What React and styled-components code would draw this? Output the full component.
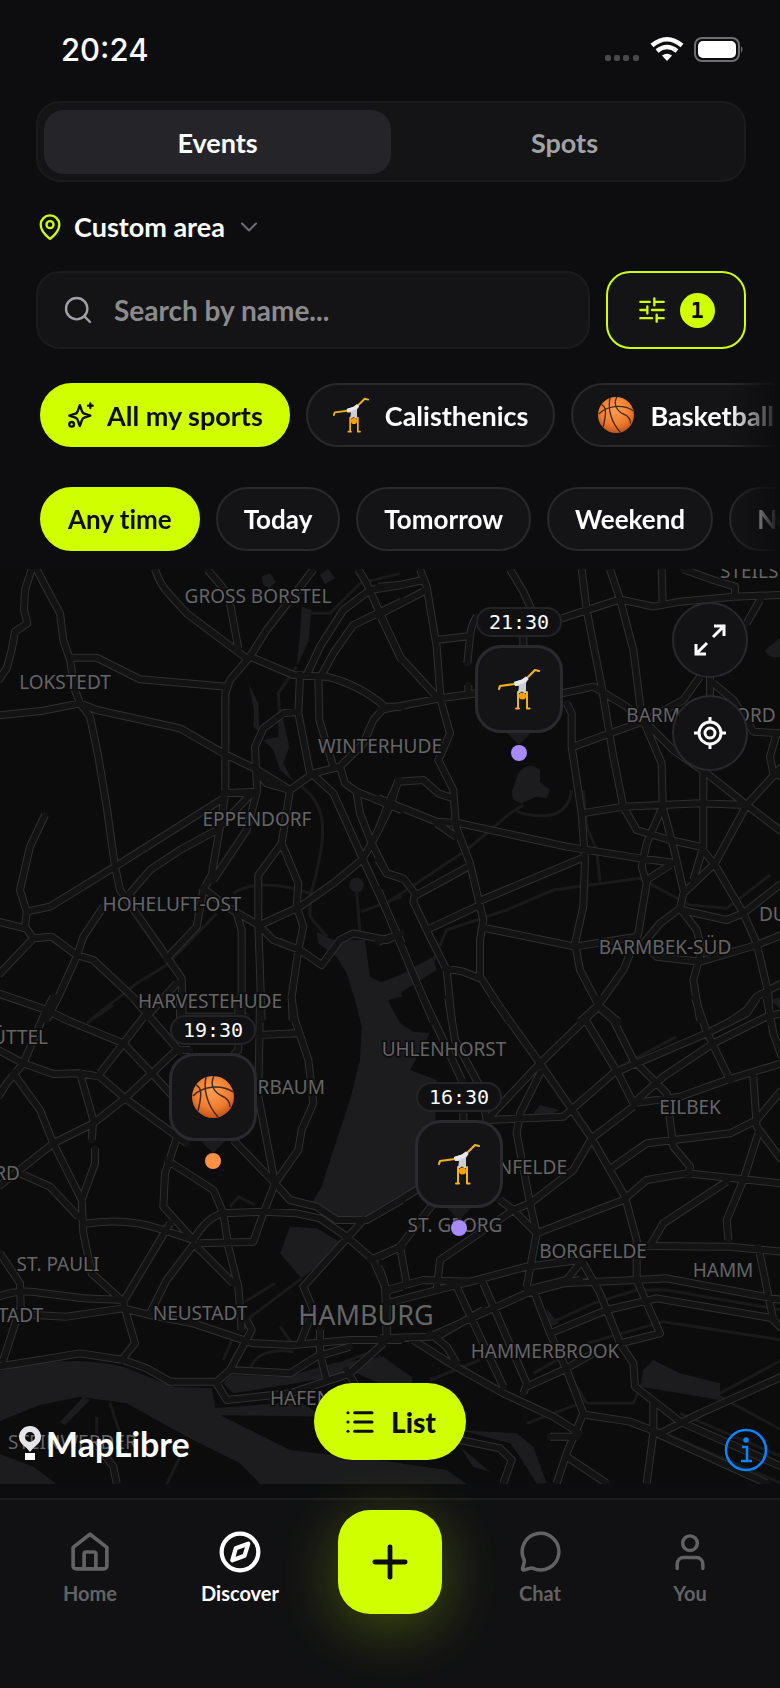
import styled, { createGlobalStyle } from 'styled-components';
import { MapPin, ChevronDown, Search, Plus, List } from 'lucide-react';

const lime = '#d0ff00';

const GlobalStyle = createGlobalStyle`
  * { box-sizing: border-box; }
  body {
    margin: 0;
    background: #0d0d0f;
    color: #fff;
    font-family: Lato, sans-serif;
    font-variant-ligatures: none;
  }
  button, input { font-family: inherit; font-variant-ligatures: none; }
`;

const Screen = styled.main`
  min-height: 100vh;
  display: flex;
  flex-direction: column;
  overflow: hidden;
`;

const StatusBar = styled.div`
  height: 101px;
  padding: 0 36px 2px 61px;
  display: flex;
  justify-content: space-between;
  align-items: center;
`;

const Clock = styled.time`
  font: 500 31px Inter, sans-serif;
`;

const Header = styled.header`
  display: flex;
  flex-direction: column;
  padding: 0 34px 0 36px;
`;

const Segmented = styled.div`
  display: flex;
  height: 81px;
  padding: 7px 6px 6px;
  border: 2px solid #1b1b1d;
  border-radius: 24px;
  background: #141416;
`;

const Segment = styled.button`
  flex: 1;
  border: 0;
  border-radius: 20px;
  background: ${(p) => (p.$active ? '#252429' : 'transparent')};
  color: ${(p) => (p.$active ? '#fff' : '#a1a1a6')};
  font-size: 27px;
  font-weight: 700;
`;

const AreaButton = styled.button`
  align-self: flex-start;
  display: flex;
  align-items: center;
  height: 89px;
  padding: 0;
  gap: 10px;
  border: 0;
  background: none;
  color: #fff;
  font-size: 27px;
  font-weight: 700;
`;

const SearchRow = styled.div`
  display: flex;
  gap: 16px;
  height: 78px;
`;

const SearchBox = styled.label`
  flex: 1;
  display: flex;
  align-items: center;
  gap: 20px;
  padding: 0 24px;
  border: 2px solid #1b1b1d;
  border-radius: 24px;
  background: #141416;
  color: #a1a1a6;
`;

const SearchInput = styled.input`
  flex: 1;
  min-width: 0;
  padding: 0;
  border: 0;
  outline: 0;
  background: none;
  color: #fff;
  font-size: 28px;
  font-weight: 700;
  &::placeholder { color: #8b8b8d; }
`;

const FilterButton = styled.button`
  width: 140px;
  display: flex;
  align-items: center;
  justify-content: center;
  gap: 14px;
  border: 2px solid ${lime};
  border-radius: 24px;
  background: #141416;
  color: ${lime};
`;

const Count = styled.span`
  width: 35px;
  height: 35px;
  border-radius: 50%;
  background: ${lime};
  color: #0d0d0f;
  font: 700 22px/35px 'DejaVu Sans Mono', monospace;
`;

const ChipRow = styled.div`
  display: flex;
  gap: 16px;
  margin-top: ${(p) => p.$top}px;
  padding-left: 40px;
  overflow: hidden;
  font-size: ${(p) => p.$size}px;
  mask-image: linear-gradient(to right, #000 calc(100% - 50px), transparent);
`;

const Chip = styled.button`
  flex: none;
  display: flex;
  align-items: center;
  gap: ${(p) => (p.$active ? 12 : 16)}px;
  height: 64px;
  padding: 0 ${(p) => (p.$wide ? 26 : 25)}px;
  border: 2px solid ${(p) => (p.$active ? lime : '#29292c')};
  border-radius: 32px;
  background: ${(p) => (p.$active ? lime : '#141416')};
  color: ${(p) => (p.$active ? '#0d0d0f' : '#fff')};
  font-size: inherit;
  font-weight: 700;
  white-space: nowrap;
`;

const MapArea = styled.section`
  position: relative;
  flex: 1;
  min-height: 915px;
  margin: 18px 0 14px;
  background: #0c0c0c;
`;

const MapCanvas = styled.svg`
  position: absolute;
  inset: 0;
  width: 100%;
  height: 100%;
`;

const District = styled.text`
  font-family: 'Noto Sans', sans-serif;
  font-size: ${(p) => (p.$big ? 27 : 19)}px;
  fill: #656567;
  stroke: #0c0c0c;
  stroke-width: 3px;
  paint-order: stroke;
`;

const Marker = styled.button`
  position: absolute;
  display: flex;
  flex-direction: column;
  align-items: center;
  padding: 0;
  border: 0;
  background: none;
  color: #fff;
  transform: translateX(-50%);
`;

const MarkerTime = styled.span`
  height: 30px;
  padding: 0 11px;
  margin-bottom: 8px;
  border: 2px solid #242427;
  border-radius: 15px;
  background: #111113;
  font: 400 20px/26px 'DejaVu Sans Mono', monospace;
`;

const MarkerBox = styled.span`
  display: grid;
  place-items: center;
  width: 88px;
  height: 88px;
  border: 3px solid #2a2a2e;
  border-radius: 26px;
  background: #141417;
`;

const MarkerTail = styled.span`
  border: solid transparent;
  border-width: 12px 12px 0;
  border-top-color: #1a1a1d;
`;

const MarkerDot = styled.span`
  width: 16px;
  height: 16px;
  border-radius: 50%;
  background: ${(p) => p.$color};
`;

const MapTools = styled.div`
  position: absolute;
  top: 33px;
  right: 32px;
  display: flex;
  flex-direction: column;
  gap: 17px;
`;

const RoundButton = styled.button`
  display: grid;
  place-items: center;
  width: 76px;
  height: 76px;
  padding: 0;
  border: 2px solid #29292c;
  border-radius: 50%;
  background: #131315;
  color: #fff;
`;

const ListButton = styled.button`
  position: absolute;
  left: 50%;
  bottom: 24px;
  transform: translateX(-50%);
  display: flex;
  align-items: center;
  justify-content: center;
  gap: 15px;
  width: 152px;
  height: 77px;
  border: 0;
  border-radius: 39px;
  background: ${lime};
  color: #0d0d0f;
  font-size: 28px;
  font-weight: 900;
`;

const Attribution = styled.a`
  position: absolute;
  left: 18px;
  bottom: 20px;
  display: flex;
  align-items: center;
  gap: 4px;
  color: #fff;
  font-size: 34px;
  font-weight: 700;
  line-height: 40px;
  text-decoration: none;
`;

const InfoButton = styled.button`
  position: absolute;
  right: 12px;
  bottom: 12px;
  padding: 0;
  border: 0;
  background: none;
  line-height: 0;
`;

const TabBar = styled.nav`
  position: relative;
  display: grid;
  grid-template-columns: repeat(5, 1fr);
  height: 190px;
  padding: 10px 15px 0;
  border-top: 2px solid #1d1d1f;
  background: #111113;
`;

const Tab = styled.a`
  display: flex;
  flex-direction: column;
  align-items: center;
  gap: 7px;
  height: 104px;
  padding-top: 20px;
  color: ${(p) => (p.$active ? '#fff' : '#626265')};
  font-size: 20px;
  font-weight: 700;
  line-height: 24px;
  text-decoration: none;
`;

const AddButton = styled.button`
  justify-self: center;
  display: grid;
  place-items: center;
  width: 104px;
  height: 104px;
  padding: 0;
  border: 0;
  border-radius: 32px;
  background: ${lime};
  color: #0d0d0f;
  box-shadow: 0 12px 60px rgba(208, 255, 0, 0.27);
`;

const Basketball = ({ size }) => (
  <svg width={size} height={size} viewBox="0 0 42 42" fill="none">
    <defs>
      <radialGradient id="ball" cx=".48" cy=".35" r=".65">
        <stop offset="0" stopColor="#ffa04f" />
        <stop offset=".65" stopColor="#ef7c2e" />
        <stop offset="1" stopColor="#c3541c" />
      </radialGradient>
    </defs>
    <circle cx="21" cy="21" r="21" fill="url(#ball)" />
    <path
      d="M1 20C10 10 29 8 41 16M14 1C11 15 16 30 26 41M22 0C17 9 23 17 30 20S38 28 38 31M4 9C11 12 9 22 6 35"
      stroke="#40291f"
      strokeWidth="1.5"
    />
  </svg>
);

const Cartwheel = ({ size }) => (
  <svg width={size} height={size} viewBox="0 0 42 42" fill="none" strokeLinecap="round" strokeLinejoin="round">
    <path d="M1 21L2 18L17 16M27 12L37 2L41 3" stroke="#f2b21c" strokeWidth="2.2" />
    <path d="M20 24V40M29 24V40M18 40.500H21M29 40.500H31.500" stroke="#f2b21c" strokeWidth="2" />
    <path d="M16 14L24 11.500L28 8.500L30.500 11L28 15V25H26Q24 22 22 25H20L21 18L17 18Z" fill="#cdcdd2" />
    <path d="M16 14L24 11.500L28 8.500L30.500 11L26 15L17 18Z" fill="#e9e9ee" />
    <circle cx="24.500" cy="28" r="3.600" fill="#f59f0c" />
  </svg>
);

const Sparkles = () => (
  <svg width="28" height="28" viewBox="0 0 24 24" fill="none" stroke="currentColor" strokeWidth="2" strokeLinecap="round" strokeLinejoin="round">
    <path d="M11 3.500L12.800 8.700Q13.300 10.300 14.800 10.800L20 12.500L14.800 14.300Q13.300 14.800 12.800 16.300L11 21.500L9.200 16.300Q8.700 14.800 7.200 14.300L2 12.500L7.200 10.800Q8.700 10.300 9.200 8.700Z" />
    <path d="M20 2v4M22 4h-4" />
    <circle cx="4" cy="20" r="2" />
  </svg>
);

const Sliders = () => (
  <svg width="28" height="28" viewBox="0 0 24 24" fill="none" stroke="currentColor" strokeWidth="2" strokeLinecap="round">
    <path d="M2 5h8M14 5h8M14 2v6M2 12h6M8 9v6M12 12h10M2 19h10M16 19h6M16 16v6" />
  </svg>
);

const icon = { width: 44, height: 44, viewBox: '0 0 24 24', fill: 'none', stroke: 'currentColor', strokeLinecap: 'round', strokeLinejoin: 'round' };

const HomeIcon = () => (
  <svg {...icon} strokeWidth="2">
    <path d="M2.800 9.500L12 2.300L21.200 9.500V19.700a1.500 1.500 0 0 1-1.500 1.500H4.300A1.500 1.500 0 0 1 2.800 19.700Z" />
    <path d="M8.800 21V13a1 1 0 0 1 1-1h4.400a1 1 0 0 1 1 1V21" />
  </svg>
);

const CompassIcon = () => (
  <svg {...icon} strokeWidth="2.300">
    <circle cx="12" cy="12" r="10" />
    <path d="M16.500 7.500L14.500 14L7.800 16.500L9.700 10Z" />
  </svg>
);

const ChatIcon = () => (
  <svg {...icon} strokeWidth="1.900">
    <path d="M7.900 20.800A10 10 0 1 0 3.300 16.200Q3.600 17 3.300 18L2.500 20.900Q2.400 21.900 3.400 21.800L6.300 20.900Q7.100 20.600 7.900 20.800Z" />
  </svg>
);

const UserIcon = () => (
  <svg {...icon} strokeWidth="1.900">
    <circle cx="12" cy="7.200" r="4" />
    <path d="M5 21V18.500a3.500 3.500 0 0 1 3.500-3.500h7a3.500 3.500 0 0 1 3.500 3.500v2.500" />
  </svg>
);

const StatusIcons = () => (
  <svg width="139" height="30" viewBox="0 0 139 30">
    <g fill="#49494b">
      <rect y="20" width="6" height="6" rx="2" />
      <rect x="9" y="20" width="6" height="6" rx="2" />
      <rect x="18" y="20" width="6" height="6" rx="2" />
      <rect x="28" y="20" width="6" height="6" rx="2" />
    </g>
    <g fill="none" stroke="#fff" strokeWidth="4.500">
      <path d="M47 10.500Q62 -2 77 10.500" />
      <path d="M52 16Q62 8 72 16" />
    </g>
    <path d="M57 20.500Q62 17 67 20.500L62 26Z" fill="#fff" />
    <rect x="90" y="3" width="44" height="23" rx="7" fill="none" stroke="#6e6e70" strokeWidth="2" />
    <rect x="93" y="6" width="38" height="17" rx="5" fill="#fff" />
    <path d="M136 11Q139 14.500 136 18Z" fill="#6e6e70" />
  </svg>
);

// Tiles use three units per pixel and are placed on a 780 x 915 map.
const tiles = [
  {
    x: 0,
    y: -9,
    water:
      'M950 1115L1000 1140H1095L1110 1250L1150 1270L1205 1250V1310L1165 1320L1190 1385H1085L1040 1240L1010 1190L955 1150ZM785 50L810 40L828 65L808 85L790 75ZM960 45L985 25L1005 55L975 72ZM905 140L935 150L925 245L890 320L900 220ZM835 470L850 480L868 560L850 610L880 665L840 630L820 570L790 540L835 530ZM745 370L775 430L778 515L760 500L762 450ZM1048 975A22 22 0 1 1 1092 975A22 22 0 1 1 1048 975Z',
    canals:
      'M905 680Q960 720 967 790T930 1010L930 1070L980 1130M1070 990L1080 1120M890 320L835 400L840 480M700 1000Q780 950 930 1000M270 1380L410 1270L500 1215L650 1060M930 160L990 160L1080 70L1200 40M1085 1055L1205 1010',
    roads:
      'M95 28L75 90L72 150L82 190L45 215L35 270L20 325L-5 362M110 28L145 95L180 160L190 240L210 300L225 390L240 430L270 470L295 590L320 740L345 920L360 990L430 1090L500 1190L545 1255L548 1370M210 293H290L420 358L680 380M-5 466L130 452L240 430L290 450L540 505L670 580L770 628L870 690M465 28Q480 75 510 105L560 160L740 295M622 28L670 85L690 130L715 265M940 28L870 120L800 210L750 290L690 360L676 400V700L660 800L635 945L610 990L590 1100L500 1195M750 290L880 345L980 350Q1080 375 1155 440H1205M1205 75L1110 90L1030 150L960 260L920 345M1205 125L1060 195L1000 280L965 345M955 350L958 480L1000 620M1075 28L1100 70L1140 160L1205 300M900 345L895 460L930 640M895 455L850 460L790 505L765 560L768 630L772 690L740 810L640 960M1155 440L1120 480L1090 550L1020 620L940 640L870 690L800 670L775 640M870 690L845 850L895 970L890 1040L910 1100L895 1170L875 1310L878 1380M845 850L775 945V1095L785 1380M940 645L1000 700L1090 900L1205 1150M1020 620L1035 670L1070 695L1205 750M1070 700L1080 760L1115 850L1160 940L1205 955M1195 660L1170 740L1115 850L1085 900L1000 970L900 1040L780 1095M670 700L770 695M670 715L345 920L150 1040L80 1055M750 705L650 810L540 870L450 930L390 1000M135 765L90 860L60 990L80 1055L75 1100L100 1135L-5 1245M-5 1085L75 1105M100 1135L155 1130L230 1185L280 1200L440 1350M310 1040L250 1130L230 1190L180 1300L140 1380M-5 1300L140 1350L200 1380M610 985L680 1040L775 1095L820 1140L900 1170L965 1215L1020 1140L1060 1120L1160 1140L1205 1120M710 1060L725 1110V1370M545 1370H740M530 1270L440 1370',
  },
  {
    x: 380,
    y: -9,
    water:
      'M415 640Q445 600 480 630V665L510 690L500 715L470 710L425 730Q390 725 397 690ZM1155 270L1205 230V290Q1165 300 1155 270ZM-5 1270L60 1245L160 1190L170 1230L60 1300L20 1310L-5 1320ZM1170 1320L1205 1310V1350Z',
    canals:
      'M160 1200L200 1110L380 1050L520 990L780 955L930 1035L1040 1045L1170 945M660 965L650 870L620 800L610 690M20 1030L260 870L390 760L430 735M410 755Q560 800 575 690',
    roads:
      'M120 28L140 80L170 260L182 420L210 520L175 600L220 690L228 800L270 910L310 1080L300 1140V1250L385 1380M-5 80L60 75L130 60M-5 165L130 95M0 165L60 290L170 410M170 240L270 228M265 400V375M290 170Q275 190 270 228L262 310M0 450L180 415L290 400M545 400L640 380L740 440L790 490M390 28L430 95L455 150M430 220V260M605 28L620 150L665 380L700 590L730 740L770 810L870 840M545 175L720 118L820 140L900 125L1060 110L1205 105M690 28L720 118L760 270L785 470L845 610L848 740L800 850L785 920L800 970L775 1120L730 1230L655 1335L600 1385M845 28L848 125M910 28L1000 60L1065 80V110M1140 120L1100 190M960 350L910 420L800 480L580 560M990 350V410M1000 370L1060 420L1120 515L1205 520M800 490L880 570L980 640L1100 735L1205 815M560 430L575 460V560L605 760L615 900L610 1040L585 1150L600 1230L655 1335L715 1385M605 760L730 740L960 730L1100 735M970 640V860L940 960M-5 715L170 785L240 790L560 860L780 895L890 910M30 720L55 665L130 660L175 700L220 715M30 720L-5 810M170 790L228 830M-5 900L20 940L70 955L105 1000L100 1025L150 1130L200 1230L215 1380M110 1005L265 920M-5 990L50 1125L160 1385M-5 1145L50 1125M150 1105L300 1035M305 1020L605 895M320 1105L585 1160L770 1130M195 1225L250 1235L300 1255M848 740L880 860L910 990M870 840L960 860L1005 915L1090 1060L1130 1150L1165 1300L1170 1385M1190 520L1170 590L1180 640L1205 650M1205 620L1100 735L1005 910L910 1000L900 1045L840 1090L790 1150L830 1190L960 1205L1130 1155L1205 1125M900 1045L950 1110L965 1170L940 1260L960 1380M905 1050L1040 1080L1090 1060L1205 970M1205 1270L1130 1310L1100 1350L1050 1385M800 960L870 915',
  },
  {
    x: 0,
    y: 431,
    water:
      'M1065 -5L1085 80L1080 180L1050 300L1000 450L965 560L935 610L1010 650L1110 655L1205 600V75L1160 0L1155 -5ZM870 680L950 685L1035 735L905 835L840 760ZM-5 1115Q200 1060 370 1100L520 1160L635 1165L650 1240L870 1350L1205 1390V1452H780L720 1390L560 1310L380 1210L240 1190L120 1215L-5 1265ZM-5 1360L100 1400L170 1452H-5ZM180 1265L250 1190L270 1200L195 1275ZM670 1150L690 1125L860 1130L1000 1090L1150 1070L1205 1110V1180L1070 1120L700 1180ZM640 1225L900 1205L970 1250L640 1245Z',
    canals:
      'M735 905L825 850M740 960L905 835M670 1080L700 1010M750 1110Q770 1040 880 1055M840 980L880 1035M920 1130L1100 1060M500 1452L550 1350M290 1250V1300M330 1210L380 1360M690 620L715 590L765 615M260 70L340 15',
    roads:
      'M-5 -20L140 30L200 60L370 130L460 225L520 290M160 -10L130 50L70 190L20 250L-5 290M-5 150L70 190L160 222L240 220L300 230L375 295L560 430M240 220L280 360L275 420M285 445V490L245 600L250 700L275 820L370 905M40 220L120 330L160 430L245 600M-5 560L160 430L280 370L375 295L530 150M440 40L300 220M400 -5L440 40L540 155M540 -5V70M545 150H570M715 -5V150L700 165M780 -5L775 290L825 550M875 -5L885 60L925 180L940 310L905 390L895 450L825 550M775 105L890 100M700 420L825 550L870 600L950 620L1010 660H1100L1205 600M825 550L790 640L760 725L600 730M670 640L790 635L890 640L960 655L1040 710M530 415L495 520L490 620L580 720M500 480L640 570L670 640L685 740L715 860L725 990M60 520L150 560L235 650M250 672Q380 650 490 690L580 720Q620 650 670 640M510 670L370 905M580 735L500 840L450 940M590 740L700 850M0 760L60 850L62 920L10 1080M-5 890Q60 865 130 880L250 895L370 900M100 945L200 950L370 925L450 945L580 970L760 1030L880 1035L1050 1020H1205M370 910L405 1030L365 1080M-5 1100L120 1080L240 1060L370 1080L440 1105L510 1145H650L690 1110M740 960L755 990L690 1110L870 1120L950 1070L1050 1040M650 1150L680 1200L870 1180L1050 1120L1150 1030M1090 660L910 860L940 930L900 1030M1040 710L1120 780L1155 860L1160 1000M960 990V1060L980 1140M1040 1110L1070 1160M1110 780L1205 740M1170 870L1205 860M295 1340L340 1400L350 1450',
  },
  {
    x: 380,
    y: 431,
    water:
      'M-5 -5L20 0L60 70L100 95L150 100L140 120L90 210L170 240L160 560L110 570L-5 640ZM790 1110L820 1080L900 1120L1020 1150V1200L900 1180L780 1160ZM460 340L480 315L540 330L490 350ZM240 1290L410 1300L460 1340L500 1450H470L420 1370L390 1330ZM240 1340L330 1415L280 1400ZM500 925L535 970L510 980ZM-5 1065L95 1130L100 1160L-5 1150ZM60 1390L200 1410L260 1452H60Z',
    canals:
      'M1020 1180L1205 1080M1020 1190L1205 1290M520 965L640 910L770 870L860 870L1205 930M460 1120L620 1030L850 965L1205 1020M560 1110L620 1210H760L790 1140M440 1270L600 1210M150 1140L300 1080M830 1290L1205 1450M900 1240L1205 1370M720 200L890 110',
    roads:
      'M130 -5L180 100L245 240M250 340V360M205 -5L225 120L300 260L320 360M340 -5L480 190L635 415L735 590L770 720V840L840 1000L720 1030M655 20L480 190L320 360L550 350L700 220L980 100L1100 40L1130 -5M655 -5V20L700 60L760 180L860 280L880 440L930 500L925 530M620 65L720 230L760 310L850 230L1000 130L1160 50L1205 40M945 -5L980 95L1050 240M760 310L900 290L1040 240L1205 190M1160 -5L1180 100L1205 170M480 220L420 340L410 400L450 610L470 700L440 860M-5 640L110 570M450 610L580 510L635 415L760 320M700 500L800 430L1050 400L1130 360L1205 270M1120 230L1130 380L1205 480M1135 400L1090 540L1040 660L1045 720M470 700L730 600L800 540L920 520L1205 550M815 730L850 670L1040 545M800 738L1050 740L1205 755M1135 740L1180 960L1205 985M360 600L400 630L470 700M450 610L400 630L180 780L170 870M0 770L60 740L160 610M60 740L80 850M-5 800Q20 850 20 900V1010M20 870L130 840L270 845L440 800L600 780M20 910L170 870L290 840M0 1015L150 1010L440 880L550 850L770 840L860 835L1205 900M180 1005L310 930M440 870L600 840M510 1000L680 930L830 895L1180 955M230 860L370 1160M310 850L440 1150M100 1020L210 1090L370 1180L520 1250L600 1300M150 1000L200 1040L230 1090M440 1160L550 1110L640 1060M430 1180L440 1155M720 1030L760 1090L765 1160L900 1265L1205 1400M460 870L510 1000L560 1110L610 1240L560 1360L530 1450M610 790L660 880L720 1030M600 790L560 840L440 870M620 1245L750 1265L840 1300L960 1240L1205 1130M820 1210V1300L800 1450M830 1300L1160 1450M240 1320L360 1345L395 1380L370 1450M560 1370L680 1450M510 1310H590',
  },
];

const districts = [
  ['GROSS BORSTEL', 258, 34],
  ['STEILSHOOP', 720, 9, 'start'],
  ['LOKSTEDT', 65, 120],
  ['WINTERHUDE', 380, 184],
  ['BARMBEK-NORD', 701, 153],
  ['EPPENDORF', 257, 257],
  ['HOHELUFT-OST', 172, 342],
  ['DULSBERG', 759, 352, 'start'],
  ['BARMBEK-SÜD', 665, 385],
  ['HARVESTEHUDE', 210, 439],
  ['EIMSBÜTTEL', 48, 475, 'end'],
  ['UHLENHORST', 444, 487],
  ['ROTHERBAUM', 325, 525, 'end'],
  ['EILBEK', 690, 545],
  ['HOHENFELDE', 567, 605, 'end'],
  ['ALTONA-NORD', 20, 611, 'end'],
  ['ST. GEORG', 455, 663],
  ['BORGFELDE', 593, 689],
  ['ST. PAULI', 58, 702],
  ['HAMM', 723, 708],
  ['ALTONA-ALTSTADT', 43, 753, 'end'],
  ['NEUSTADT', 200, 751],
  ['HAMBURG', 366, 756],
  ['HAMMERBROOK', 545, 789],
  ['HAFENCITY', 270, 836, 'start'],
  ['STEINWERDER', 8, 880, 'start'],
];

const events = [
  { time: '21:30', x: 519, y: 38, color: '#a78bfa', Icon: Cartwheel },
  { time: '19:30', x: 213, y: 446, color: '#ff9147', Icon: Basketball },
  { time: '16:30', x: 459, y: 513, color: '#a78bfa', Icon: Cartwheel },
];

const Layer = ({ part, ...style }) => (
  <g fill="none" strokeLinejoin="round" {...style}>
    {tiles.map((t) => (
      <path key={`${t.x},${t.y}`} d={t[part]} transform={`translate(${t.x} ${t.y}) scale(${1 / 3})`} />
    ))}
  </g>
);

const CityMap = () => (
  <MapArea aria-label="Map">
    <MapCanvas viewBox="0 0 780 915" preserveAspectRatio="none">
      <Layer part="water" fill="#1c1c1e" />
      <Layer part="canals" stroke="#1a1a1b" strokeWidth="9" />
      <Layer part="roads" stroke="#303032" strokeWidth="24" />
      <Layer part="roads" stroke="#131314" strokeWidth="18" strokeLinecap="square" />
      {districts.map(([name, x, y, anchor]) => (
        <District key={name} x={x} y={y} textAnchor={anchor || 'middle'} $big={name === 'HAMBURG'}>
          {name}
        </District>
      ))}
    </MapCanvas>
    {events.map(({ time, x, y, color, Icon }) => (
      <Marker key={time} style={{ left: `${(x / 780) * 100}%`, top: `${(y / 915) * 100}%` }}>
        <MarkerTime>{time}</MarkerTime>
        <MarkerBox><Icon size={42} /></MarkerBox>
        <MarkerTail />
        <MarkerDot $color={color} />
      </Marker>
    ))}
    <MapTools>
      <RoundButton aria-label="Expand map">
        <svg width="34" height="34" viewBox="0 0 34 34" fill="none" stroke="currentColor" strokeWidth="3">
          <path d="M20 14L31 3M21 3H31V13M14 20L3 31M3 21V31H13" />
        </svg>
      </RoundButton>
      <RoundButton aria-label="Locate me">
        <svg width="34" height="34" viewBox="0 0 34 34" fill="none" stroke="currentColor" strokeWidth="3">
          <circle cx="17" cy="17" r="11" />
          <circle cx="17" cy="17" r="5" />
          <path d="M17 1V6M17 28V33M1 17H6M28 17H33" />
        </svg>
      </RoundButton>
    </MapTools>
    <Attribution href="#maplibre">
      <svg width="24" height="38" viewBox="0 0 24 38">
        <path fillRule="evenodd" d="M12 1a11 11 0 0 1 11 11c0 7-7 9-11 15C8 21 1 19 1 12A11 11 0 0 1 12 1ZM12 7a5 5 0 1 0 0 10a5 5 0 0 0 0-10Z" fill="#e6e6ea" />
        <path d="M7 28H17V35H7Z" fill="#fff" />
      </svg>
      MapLibre
    </Attribution>
    <ListButton>
      <List size={32} strokeWidth={2.3} />
      List
    </ListButton>
    <InfoButton aria-label="Map attribution">
      <svg width="44" height="44" viewBox="0 0 44 44" fill="none" stroke="#0a84ff" strokeWidth="2.500">
        <circle cx="22" cy="22" r="20" />
        <path d="M18 19H23V33M17 33H28" />
        <circle cx="22" cy="12" r="1.500" fill="#0a84ff" />
      </svg>
    </InfoButton>
  </MapArea>
);

export default function App() {
  return (
    <Screen>
      <GlobalStyle />
      <StatusBar>
        <Clock>20:24</Clock>
        <StatusIcons />
      </StatusBar>
      <Header>
        <Segmented role="tablist">
          <Segment role="tab" aria-selected="true" $active>Events</Segment>
          <Segment role="tab" aria-selected="false">Spots</Segment>
        </Segmented>
        <AreaButton>
          <MapPin size={28} color={lime} />
          Custom area
          <ChevronDown size={28} color="#6e6e72" strokeWidth={1.8} />
        </AreaButton>
        <SearchRow>
          <SearchBox>
            <Search size={32} strokeWidth={1.8} />
            <SearchInput aria-label="Search by name" placeholder="Search by name..." />
          </SearchBox>
          <FilterButton aria-label="Filters">
            <Sliders />
            <Count>1</Count>
          </FilterButton>
        </SearchRow>
      </Header>
      <ChipRow $top={34} $size={27}>
        <Chip $active><Sparkles />All my sports</Chip>
        <Chip><Cartwheel size={36} />Calisthenics</Chip>
        <Chip><Basketball size={36} />Basketball</Chip>
      </ChipRow>
      <ChipRow $top={40} $size={26}>
        <Chip $wide $active>Any time</Chip>
        <Chip $wide>Today</Chip>
        <Chip $wide>Tomorrow</Chip>
        <Chip $wide>Weekend</Chip>
        <Chip $wide>Next week</Chip>
      </ChipRow>
      <CityMap />
      <TabBar>
        <Tab href="#home"><HomeIcon />Home</Tab>
        <Tab href="#discover" aria-current="page" $active><CompassIcon />Discover</Tab>
        <AddButton aria-label="Add event"><Plus size={52} strokeWidth={2.2} /></AddButton>
        <Tab href="#chat"><ChatIcon />Chat</Tab>
        <Tab href="#you"><UserIcon />You</Tab>
      </TabBar>
    </Screen>
  );
}
